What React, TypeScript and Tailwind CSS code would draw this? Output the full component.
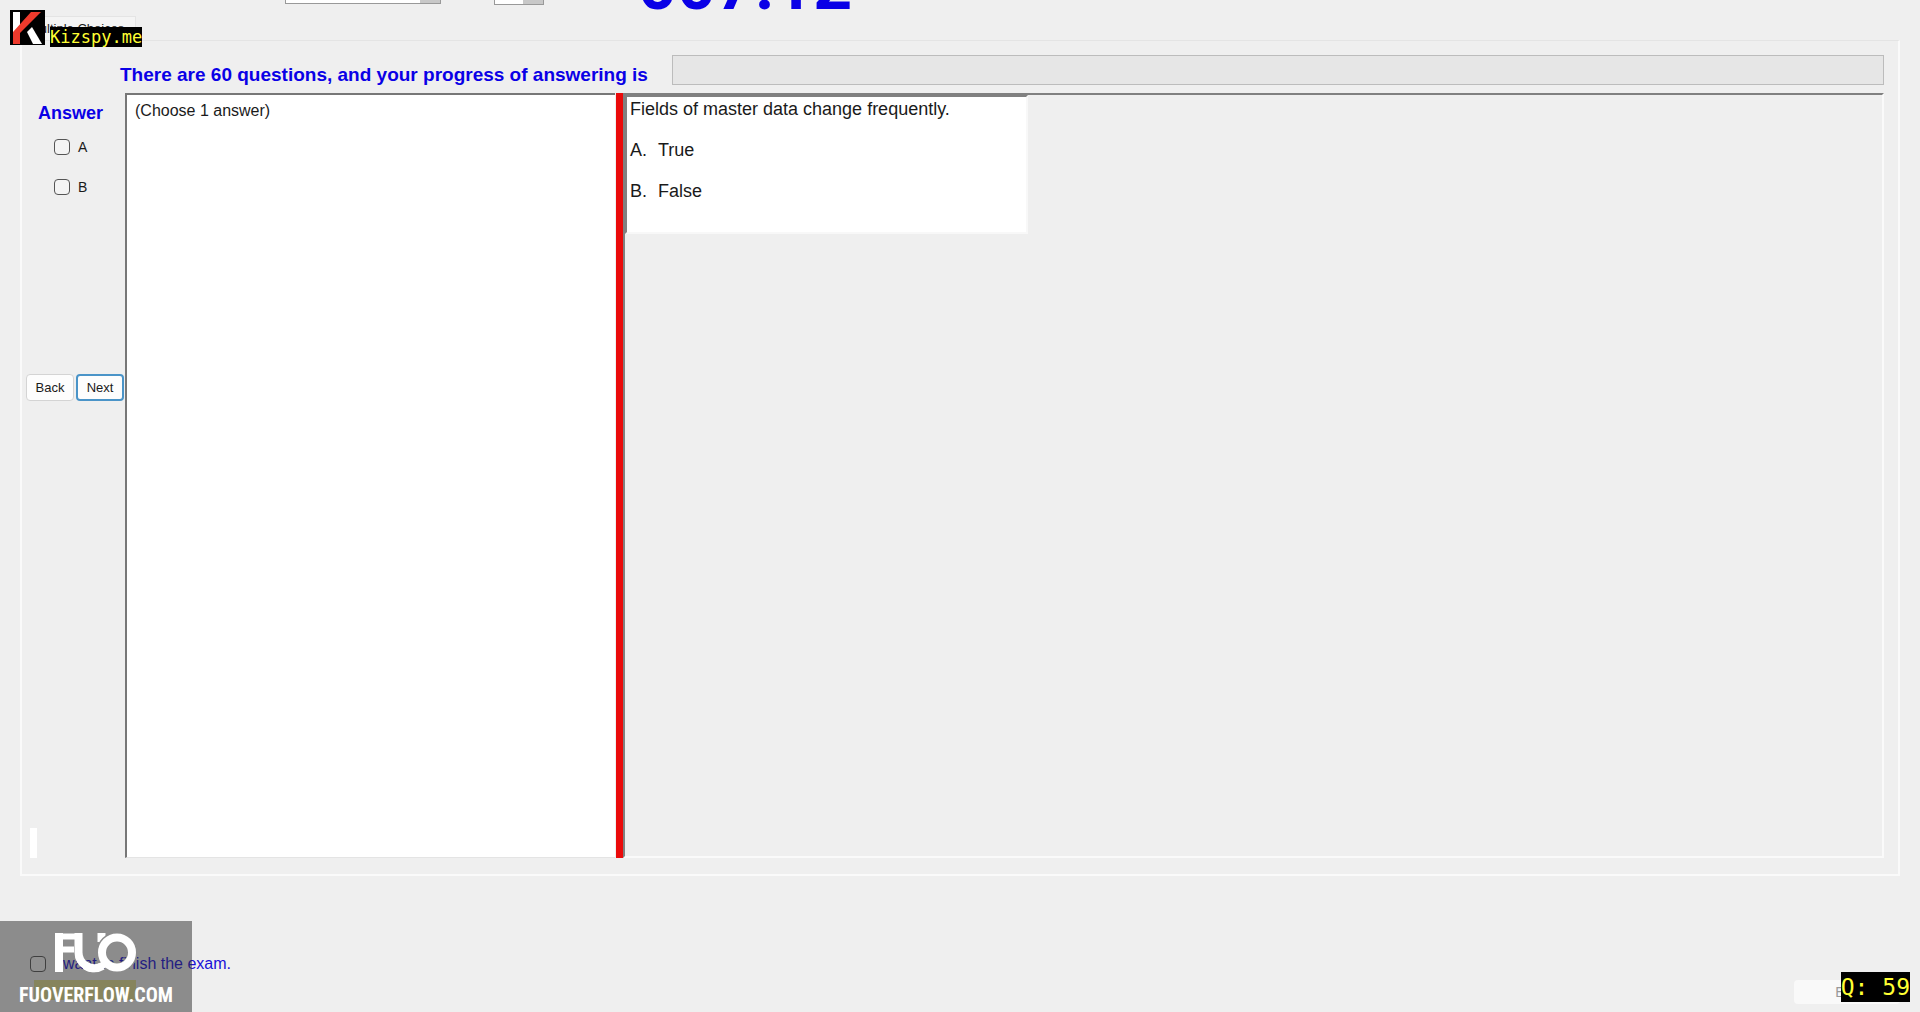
import React, { useState } from 'react';

const answers = ['A', 'B'];

const choices = [
  { letter: 'A', text: 'True' },
  { letter: 'B', text: 'False' },
];

const checkboxClass =
  'appearance-none size-4 shrink-0 rounded border border-[#555] bg-[#f4f4f4] checked:bg-[#0067c0]';

const KizspyLogo = () => (
  <svg width="35" height="35" viewBox="0 0 35 35" aria-hidden="true">
    <rect width="35" height="35" fill="#000" />
    <path d="M3 2h7v14l-7 7z" fill="#fff" />
    <path d="M21 2h10L10 23v11H3V22z" fill="#ee3a2c" />
    <path d="M22 17l10 17h-9L17 22z" fill="#fff" />
  </svg>
);

const FuoLogo = () => (
  <svg width="82" height="40" viewBox="0 0 82 40" aria-hidden="true">
    <g fill="none" stroke="#fff">
      <path d="M4 39V0" strokeWidth="8" />
      <path d="M4 3.500H21M4 16.500H19" strokeWidth="6" />
      <path d="M23.500 0v19a16 16 0 0 0 24 14" strokeWidth="8" />
      <path d="M46.500 0v9" strokeWidth="8" />
      <circle cx="62" cy="19.500" r="15.500" stroke="#8c8c8c" strokeWidth="10" />
      <path d="M30 33q8 6 18-1l4-4" strokeWidth="7" />
      <circle cx="62" cy="19.500" r="15" strokeWidth="8" />
    </g>
  </svg>
);

const App = () => {
  const [checked, setChecked] = useState<string[]>([]);
  const [finish, setFinish] = useState(false);

  const toggle = (letter: string) =>
    setChecked((prev) =>
      prev.includes(letter) ? prev.filter((l) => l !== letter) : [...prev, letter]
    );

  return (
    <div className="relative flex flex-col min-h-screen overflow-hidden bg-[#efefef] font-['Liberation_Sans',sans-serif] text-[#1a1a1a]">
      {/* Top strip, scrolled almost out of view */}
      <header className="flex h-10 items-start pl-5">
        <div className="mt-4 h-6 w-[116px] border border-b-0 border-[#e4e4e4] bg-[#f4f4f4] pl-2 text-[13px] leading-6 whitespace-nowrap">
          Multiple Choices
        </div>
        <div className="ml-[149px] flex h-1 w-[156px] justify-end border border-t-0 border-[#999] bg-white">
          <span className="w-5 bg-[#c8c8c8]" />
        </div>
        <div className="ml-[53px] flex h-[5px] w-[50px] justify-end border border-t-0 border-[#999] bg-white">
          <span className="w-5 bg-[#c8c8c8]" />
        </div>
        <div className="ml-[94px] flex h-5 items-end">
          <span className="font-['Roboto',sans-serif] text-[68px] leading-[68px] font-bold text-[#0a00e6]">007:12</span>
        </div>
      </header>

      <main className="mx-5 flex min-h-[836px] flex-col border-2 border-t border-[#fafafa] border-t-[#e4e4e4] pr-[14px] pb-4 pl-1">
        <div className="flex h-[44px] items-start pt-[14px] pl-[94px]">
          <h1 className="mt-2 text-[19px] leading-6 font-bold text-[#0a00e6]">
            There are 60 questions, and your progress of answering is
          </h1>
          <div className="ml-6 h-[30px] flex-1 border border-[#bcbcbc] bg-[#e6e6e6]" role="progressbar" aria-label="Progress" />
        </div>

        <div className="mt-2 flex flex-1">
          <aside className="flex w-[99px] flex-col">
            <h2 className="mt-2 pl-3 text-lg leading-6 font-bold text-[#0a00e6]">Answer</h2>
            <div className="mt-[14px] flex flex-col gap-6 pl-7">
              {answers.map((letter) => (
                <label key={letter} className="flex h-4 items-center gap-2 text-sm">
                  <input
                    type="checkbox"
                    className={checkboxClass}
                    checked={checked.includes(letter)}
                    onChange={() => toggle(letter)}
                  />
                  {letter}
                </label>
              ))}
            </div>
            <div className="mt-[179px] flex gap-[2px]">
              <button className="h-[27px] w-12 rounded border border-[#d4d4d4] bg-[#fdfdfd] text-[13px]">Back</button>
              <button className="h-[27px] w-12 rounded border-2 border-[#4a94c8] bg-[#fdfdfd] text-[13px]">Next</button>
            </div>
            <div className="mt-auto ml-1 h-[30px] w-[7px] bg-white" />
          </aside>

          <section className="w-[490px] border-t-2 border-b border-l-2 border-[#777] border-b-[#e4e4e4] bg-white pt-1 pl-2 text-base leading-6">
            (Choose 1 answer)
          </section>
          <div className="ml-px w-[7px] bg-[#ea0a0a]" />
          <section className="flex-1 border-2 border-[#fafafa] border-t-[#808080] border-l-[#808080]">
            <article className="h-[139px] w-[403px] border-2 border-t-[#808080] border-l-[#808080] border-[#f8f8f8] bg-white pt-[2px] pl-[3px] text-lg leading-[21px]">
              <p>Fields of master data change frequently.</p>
              {choices.map((c) => (
                <p key={c.letter} className="mt-5 flex gap-2">
                  <span className="w-5">{c.letter}.</span>
                  {c.text}
                </p>
              ))}
            </article>
          </section>
        </div>
      </main>

      <footer className="flex flex-1 items-start justify-between pt-[76px] pl-[30px]">
        <div>
          <label className="flex items-center gap-2 text-base leading-6 text-[#1a10d8]">
            <input
              type="checkbox"
              className={checkboxClass}
              checked={finish}
              onChange={(e) => setFinish(e.target.checked)}
            />
            I want to finish the exam.
          </label>
          <div className="mt-1 ml-1 h-5 w-[102px] bg-[#e2df90]" />
        </div>
        <button className="mt-7 mr-5 h-6 w-[106px] rounded bg-[#f9f9f9] text-sm text-[#999]">Exit</button>
      </footer>

      {/* Overlays */}
      <div className="absolute top-[10px] left-[10px] flex items-start">
        <KizspyLogo />
        <span className="mt-[17px] ml-[5px] bg-black font-['DejaVu_Sans_Mono',monospace] text-[17px] leading-5 text-[#ff3]">
          Kizspy.me
        </span>
      </div>
      <div className="absolute bottom-0 left-0 flex h-[91px] w-48 flex-col items-center bg-[#292929]/50 pt-3">
        <FuoLogo />
        <span className="mt-2 font-['Liberation_Sans_Narrow','Roboto_Condensed',sans-serif] text-xl leading-7 font-bold text-white">
          FUOVERFLOW.COM
        </span>
      </div>
      <div className="absolute right-[10px] bottom-[10px] bg-black font-['DejaVu_Sans_Mono',monospace] text-[23px] leading-[30px] text-[#ff3]">
        Q: 59
      </div>
    </div>
  );
};

export default App;
